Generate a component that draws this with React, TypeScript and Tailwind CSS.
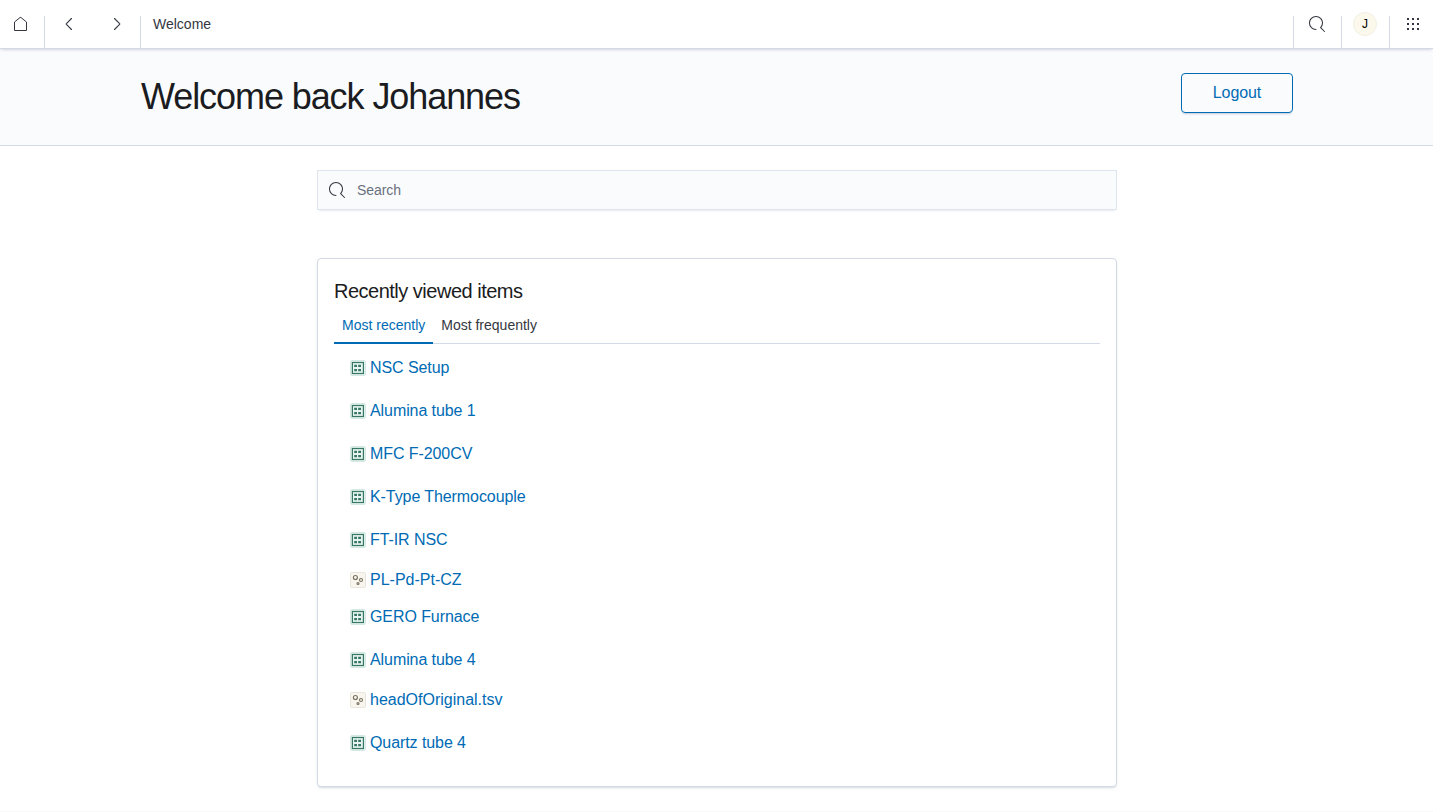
import React from "react";

type ItemKind = "table" | "file";

interface RecentItem {
  name: string;
  kind: ItemKind;
  spacing: string;
}

const items: RecentItem[] = [
  { name: "NSC Setup", kind: "table", spacing: "" },
  { name: "Alumina tube 1", kind: "table", spacing: "mt-[19px]" },
  { name: "MFC F-200CV", kind: "table", spacing: "mt-[19px]" },
  { name: "K-Type Thermocouple", kind: "table", spacing: "mt-[19px]" },
  { name: "FT-IR NSC", kind: "table", spacing: "mt-[19px]" },
  { name: "PL-Pd-Pt-CZ", kind: "file", spacing: "mt-4" },
  { name: "GERO Furnace", kind: "table", spacing: "mt-[13px]" },
  { name: "Alumina tube 4", kind: "table", spacing: "mt-[19px]" },
  { name: "headOfOriginal.tsv", kind: "file", spacing: "mt-4" },
  { name: "Quartz tube 4", kind: "table", spacing: "mt-[19px]" },
];

function SearchIcon() {
  return (
    <svg width="16" height="16" viewBox="0 0 16 16" fill="currentColor" aria-hidden="true">
      <path d="M11.271 11.978l3.872 3.873a.502.502 0 00.708 0 .502.502 0 000-.708l-3.565-3.564c2.38-2.747 2.267-6.923-.342-9.532-2.73-2.73-7.17-2.73-9.898 0-2.728 2.729-2.728 7.17 0 9.9a6.955 6.955 0 004.949 2.05.5.5 0 000-1 5.96 5.96 0 01-4.242-1.757 6.01 6.01 0 010-8.486 6.004 6.004 0 018.484 0 6.01 6.01 0 010 8.486.5.5 0 00-.034.738z" />
    </svg>
  );
}

function HomeIcon() {
  return (
    <svg width="16" height="16" viewBox="0 0 16 16" fill="none" stroke="currentColor" strokeLinejoin="round" aria-hidden="true">
      <path d="M2.5 14.5V6L8.050 1.500h.9L14.500 6v8.500z" />
    </svg>
  );
}

function Chevron({ left = false }: { left?: boolean }) {
  return (
    <svg width="16" height="16" viewBox="0 0 16 16" fill="none" stroke="currentColor" strokeWidth="1.1" strokeLinecap="round" aria-hidden="true">
      <path d={left ? "M10.5 2.5 5.400 7.600a.55.55 0 0 0 0 .8l5.100 5.100" : "M5.500 2.500l5.100 5.100a.55.55 0 0 1 0 .8l-5.100 5.100"} />
    </svg>
  );
}

function AppsIcon() {
  return (
    <svg width="16" height="16" viewBox="0 0 16 16" fill="currentColor" aria-hidden="true">
      {[2, 7, 12].map((y) => [2, 7, 12].map((x) => <rect key={`${x}-${y}`} x={x} y={y} width="2" height="2" />))}
    </svg>
  );
}

function ItemIcon({ kind }: { kind: ItemKind }) {
  if (kind === "table") {
    return (
      <svg width="16" height="16" viewBox="0 0 16 16" aria-hidden="true">
        <rect x=".5" y=".5" width="15" height="15" rx="1.5" fill="#e1f1eb" stroke="#d3e9e1" />
        <rect x="2.400" y="2.500" width="11" height="11" fill="#e8f4f0" stroke="#387765" strokeWidth="1.200" />
        <path d="M4.200 4.800h2.800v2.300H4.200zM8.200 4.800h2.800v2.300H8.200zM4.200 8.900h2.800v2.300H4.200zM8.200 8.900h2.800v2.300H8.200z" fill="#387765" />
      </svg>
    );
  }
  return (
    <svg width="16" height="16" viewBox="0 0 16 16" fill="none" aria-hidden="true">
      <rect x=".5" y=".5" width="15" height="15" rx="1.500" fill="#f7f5ee" stroke="#e9e5db" />
      <g stroke="#79715d" strokeWidth="1.150">
        <circle cx="5.400" cy="5.500" r="2" />
        <circle cx="11" cy="8" r="1.500" />
        <circle cx="8" cy="11.500" r="1" />
      </g>
    </svg>
  );
}

export default function App() {
  return (
    <div className="h-[812px] overflow-hidden bg-white font-['Liberation_Sans',Arial,sans-serif] text-[#343741]">
      <header className="relative flex h-[49px] border-b border-[#d3dae6] bg-white shadow-[0_2px_2px_-1px_rgba(152,162,179,0.3),0_1px_5px_-2px_rgba(152,162,179,0.3)]">
        <button aria-label="Home" className="flex h-12 w-11 items-center pl-3">
          <HomeIcon />
        </button>
        <div className="mt-4 h-8 w-px bg-[#d3dae6]" />
        <button aria-label="Back" className="flex h-12 w-12 items-center justify-center">
          <Chevron left />
        </button>
        <button aria-label="Forward" className="flex h-12 w-[47px] items-center justify-center">
          <Chevron />
        </button>
        <div className="mt-4 h-8 w-px bg-[#d3dae6]" />
        <nav className="flex h-12 items-center pl-3 text-sm">Welcome</nav>
        <div className="ml-auto flex">
          <button aria-label="Search" className="mt-4 flex h-8 w-12 border-l border-[#d3dae6] pl-[15px]">
            <SearchIcon />
          </button>
          <div className="mt-4 flex h-8 w-12 border-l border-[#d3dae6] pl-[11px]">
            <span className="-mt-1 flex size-6 items-center justify-center rounded-full border border-[#f1eee2] bg-[#fcf9ec] text-xs text-black">J</span>
          </div>
          <button aria-label="Apps" className="mt-4 flex h-8 w-11 justify-center border-l border-[#d3dae6] pl-[3px]">
            <AppsIcon />
          </button>
        </div>
      </header>

      <section className="h-[97px] border-b border-[#d3dae6] bg-[#fafbfd]">
        <div className="ml-[141px] flex w-[1152px] items-start justify-between pt-6">
          <h1 className="text-[36px] leading-[48px] tracking-[-0.03em] text-[#1a1c21]">Welcome back Johannes</h1>
          <button className="h-10 w-28 rounded-[4px] border border-[#006bb4] text-base tracking-[-0.005em] text-[#006bb4] shadow-[0_2px_2px_-1px_rgba(54,97,126,0.3)]">
            Logout
          </button>
        </div>
      </section>

      <main className="ml-[317px] w-[800px] pt-6">
        <label className="flex h-10 items-center gap-3 border border-[#dfe5ef] bg-[#fafbfd] pl-[11px] shadow-[0_1px_1px_-1px_rgba(152,162,179,0.2),0_3px_2px_-2px_rgba(152,162,179,0.2)]">
          <SearchIcon />
          <input type="text" placeholder="Search" className="flex-1 bg-transparent text-sm tracking-[-0.005em] outline-none placeholder:text-[#6a717d]" />
        </label>

        <section className="mt-12 h-[529px] rounded-[4px] border border-[#d3dae6] bg-white px-4 pt-4 shadow-[0_2px_2px_-1px_rgba(152,162,179,0.3),0_1px_5px_-2px_rgba(152,162,179,0.3)]">
          <h2 className="text-xl leading-8 tracking-[-0.025em] text-[#1a1c21]">Recently viewed items</h2>
          <div className="flex h-[37px] text-sm shadow-[inset_0_-1px_0_#d3dae6]">
            <button className="h-[37px] border-b-2 border-[#006bb4] px-2 text-[#006bb4]">Most recently</button>
            <button className="h-[37px] border-b-2 border-transparent px-2">Most frequently</button>
          </div>
          <ul className="pt-3 pl-4">
            {items.map((item) => (
              <li
                key={item.name}
                className={`flex h-6 items-center gap-1 text-base leading-6 text-[#006bb4] ${item.kind === "table" ? "tracking-[-0.005em]" : ""} ${item.spacing}`}
              >
                <ItemIcon kind={item.kind} />
                <a href="#">{item.name}</a>
              </li>
            ))}
          </ul>
        </section>
      </main>
      <footer className="mt-6 border-t border-[#f7f8fa]" />
    </div>
  );
}
